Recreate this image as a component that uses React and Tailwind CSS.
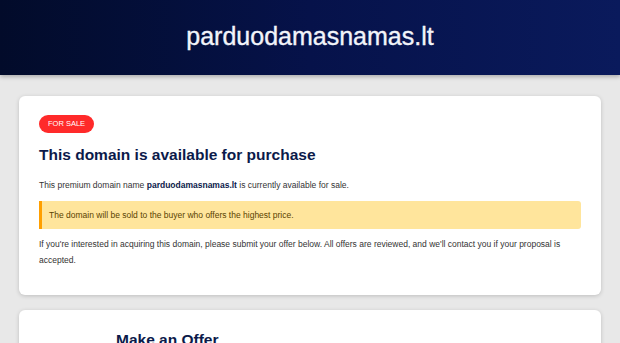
import React from 'react';

const font = { fontFamily: '"Liberation Sans", Arial, sans-serif' };

export default function App() {
  return (
    <div className="min-h-screen bg-[#e8e8e8] overflow-hidden" style={font}>
      <header className="h-[75px] bg-gradient-to-r from-[#020b2a] via-[#06124a] to-[#0a1a5c] shadow-[0_2px_4px_rgba(0,0,0,0.25)] flex items-center justify-center">
        <h1 className="text-[25px] text-[#f2f4fa] leading-none pb-[2px] [-webkit-text-stroke:0.35px_#f2f4fa]">parduodamasnamas.lt</h1>
      </header>

      <main className="px-[19px] pt-[21px] flex flex-col gap-[15px]">
        <section className="bg-white rounded-[6px] shadow-[0_1px_4px_rgba(0,0,0,0.18)] px-[20px] pt-[19px] pb-[27px]">
          <div className="flex">
            <span className="flex items-center h-[18px] px-[9px] rounded-full bg-[#ff2a2a] text-white text-[7.5px] uppercase">
              For Sale
            </span>
          </div>
          <h2 className="mt-[12px] text-[15.5px] font-bold text-[#0b1a4a] leading-[20px]">
            This domain is available for purchase
          </h2>
          <p className="mt-[12px] text-[8.5px] text-[#333] leading-[16px]">
            This premium domain name <strong className="text-[#0b1a4a]">parduodamasnamas.lt</strong> is currently available for sale.
          </p>
          <div className="mt-[8px] h-[28px] flex items-center bg-[#ffe59c] border-l-[3px] border-[#ff9f00] rounded-r-[3px] pl-[7px] text-[8.5px] text-[#5a4300]">
            The domain will be sold to the buyer who offers the highest price.
          </div>
          <p className="mt-[7px] text-[8.5px] text-[#333] leading-[16px]">
            If you're interested in acquiring this domain, please submit your offer below. All offers are reviewed, and we'll contact you if your proposal is accepted.
          </p>
        </section>

        <section className="bg-white rounded-[6px] shadow-[0_1px_4px_rgba(0,0,0,0.18)] pt-[20px] pb-[20px] pl-[97px] h-[80px]">
          <h2 className="text-[15.5px] font-bold text-[#0b1a4a] leading-[20px]">Make an Offer</h2>
        </section>
      </main>
    </div>
  );
}
